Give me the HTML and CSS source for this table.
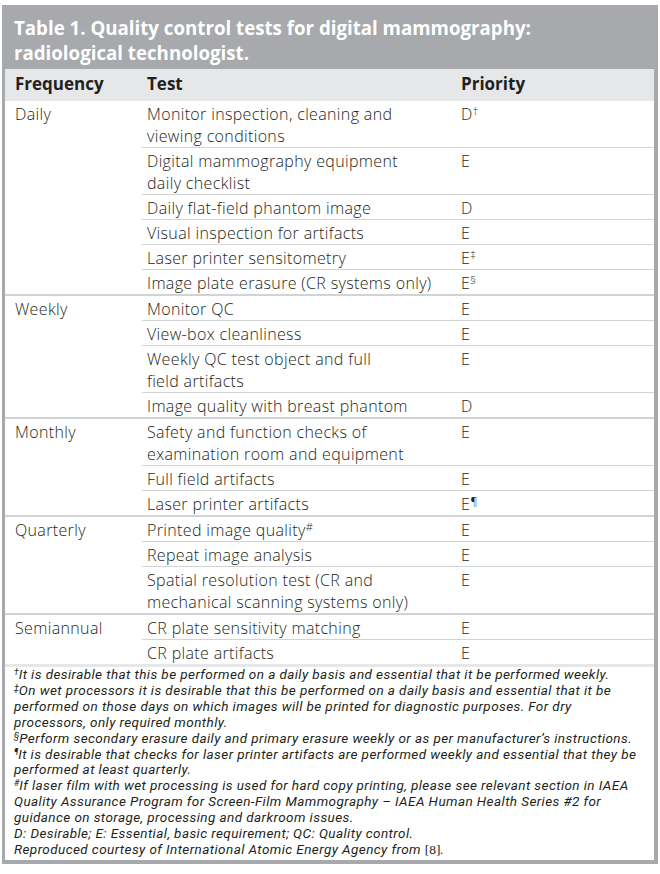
FILE: index.html
```html
<!DOCTYPE html>
<html lang="en">
<head>
<meta charset="utf-8">
<title>Table 1. Quality control tests for digital mammography</title>
<link rel="stylesheet" href="styles.css">
</head>
<body>
<div class="page">
  <div class="frame">
    <h1 class="title">Table 1. Quality control tests for digital mammography:<br>radiological technologist.</h1>
    <table class="qc">
      <colgroup><col class="c-freq"><col class="c-test"><col class="c-pri"></colgroup>
      <thead>
        <tr><th>Frequency</th><th>Test</th><th>Priority</th></tr>
      </thead>
      <tbody>
        <tr><td rowspan="6">Daily</td><td>Monitor inspection, cleaning and<br>viewing conditions</td><td>D<sup>†</sup></td></tr>
        <tr><td>Digital mammography equipment<br>daily checklist</td><td>E</td></tr>
        <tr><td>Daily flat-field phantom image</td><td>D</td></tr>
        <tr><td>Visual inspection for artifacts</td><td>E</td></tr>
        <tr><td>Laser printer sensitometry</td><td>E<sup>‡</sup></td></tr>
        <tr><td>Image plate erasure (CR systems only)</td><td>E<sup>§</sup></td></tr>
      </tbody>
      <tbody>
        <tr><td rowspan="4">Weekly</td><td>Monitor QC</td><td>E</td></tr>
        <tr><td>View-box cleanliness</td><td>E</td></tr>
        <tr><td>Weekly QC test object and full<br>field artifacts</td><td>E</td></tr>
        <tr><td>Image quality with breast phantom</td><td>D</td></tr>
      </tbody>
      <tbody>
        <tr><td rowspan="3">Monthly</td><td>Safety and function checks of<br>examination room and equipment</td><td>E</td></tr>
        <tr><td>Full field artifacts</td><td>E</td></tr>
        <tr><td>Laser printer artifacts</td><td>E<sup>¶</sup></td></tr>
      </tbody>
      <tbody>
        <tr><td rowspan="3">Quarterly</td><td>Printed image quality<sup>#</sup></td><td>E</td></tr>
        <tr><td>Repeat image analysis</td><td>E</td></tr>
        <tr><td>Spatial resolution test (CR and<br>mechanical scanning systems only)</td><td>E</td></tr>
      </tbody>
      <tbody>
        <tr><td rowspan="2">Semiannual</td><td>CR plate sensitivity matching</td><td>E</td></tr>
        <tr><td>CR plate artifacts</td><td>E</td></tr>
      </tbody>
    </table>
    <div class="notes">
      <p class="note"><sup>†</sup>It is desirable that this be performed on a daily basis and essential that it be performed weekly.</p>
      <p class="note"><sup>‡</sup>On wet processors it is desirable that this be performed on a daily basis and essential that it be<br>performed on those days on which images will be printed for diagnostic purposes. For dry<br>processors, only required monthly.</p>
      <p class="note"><sup>§</sup>Perform secondary erasure daily and primary erasure weekly or as per manufacturer’s instructions.</p>
      <p class="note"><sup>¶</sup>It is desirable that checks for laser printer artifacts are performed weekly and essential that they be<br>performed at least quarterly.</p>
      <p class="note"><sup>#</sup>If laser film with wet processing is used for hard copy printing, please see relevant section in IAEA<br>Quality Assurance Program for Screen-Film Mammography – IAEA Human Health Series #2 for<br>guidance on storage, processing and darkroom issues.</p>
      <p class="note">D: Desirable; E: Essential, basic requirement; QC: Quality control.</p>
      <p class="note">Reproduced courtesy of International Atomic Energy Agency from <span class="ref">[8]</span>.</p>
    </div>
  </div>
</div>
</body>
</html>
```

FILE: styles.css
```css
html, body {
  margin: 0;
  padding: 0;
  background: #ffffff;
}

body {
  font-family: "Open Sans", "Noto Sans", sans-serif;
  color: #231f20;
}

.page {
  padding: 5px 2px 0 2px;
}

.frame {
  width: 656px;
  box-sizing: border-box;
  background: #a7a9ac;
  padding: 0 4px 4px 3px;
}

.title {
  margin: 0;
  padding: 10px 0 4px 9px;
  color: #ffffff;
  font-size: 18.7px;
  font-weight: 700;
  line-height: 25px;
}

.qc {
  width: 100%;
  border-collapse: collapse;
  background: #ffffff;
  table-layout: fixed;
  border-bottom: 3px solid #e6e7e8;
}

.c-freq { width: 137px; }
.c-test { width: 314px; }
.c-pri { width: auto; }

.qc th {
  background: #e6e7e8;
  text-align: left;
  font-size: 17px;
  font-weight: 700;
  line-height: 22px;
  padding: 4px 0 6px 5px;
  color: #231f20;
}

.qc th:first-child {
  padding-left: 10px;
}

.qc td {
  vertical-align: top;
  font-size: 16px;
  font-weight: 300;
  letter-spacing: 0.35px;
  line-height: 22px;
  padding: 2px 0 0 5px;
  border-bottom: 1px solid #d1d3d4;
  white-space: nowrap;
}

.qc tbody tr:last-child td,
.qc td[rowspan] {
  border-bottom-width: 2px;
}

.qc td[rowspan] {
  padding-left: 10px;
}

sup {
  font-size: 0.7em;
  line-height: 0;
  vertical-align: 0.45em;
  letter-spacing: 0;
}

.notes {
  background: #ffffff;
  padding: 0 0 2px 9px;
}

.note {
  margin: 0;
  font-family: Roboto, "Open Sans", sans-serif;
  font-size: 13.5px;
  font-style: italic;
  font-weight: 400;
  letter-spacing: 0.42px;
  line-height: 15.9px;
  white-space: nowrap;
}

.note sup {
  font-size: 0.65em;
  vertical-align: 0.5em;
}

.ref {
  font-style: normal;
  font-family: "Liberation Serif", serif;
  letter-spacing: 0;
}
```
